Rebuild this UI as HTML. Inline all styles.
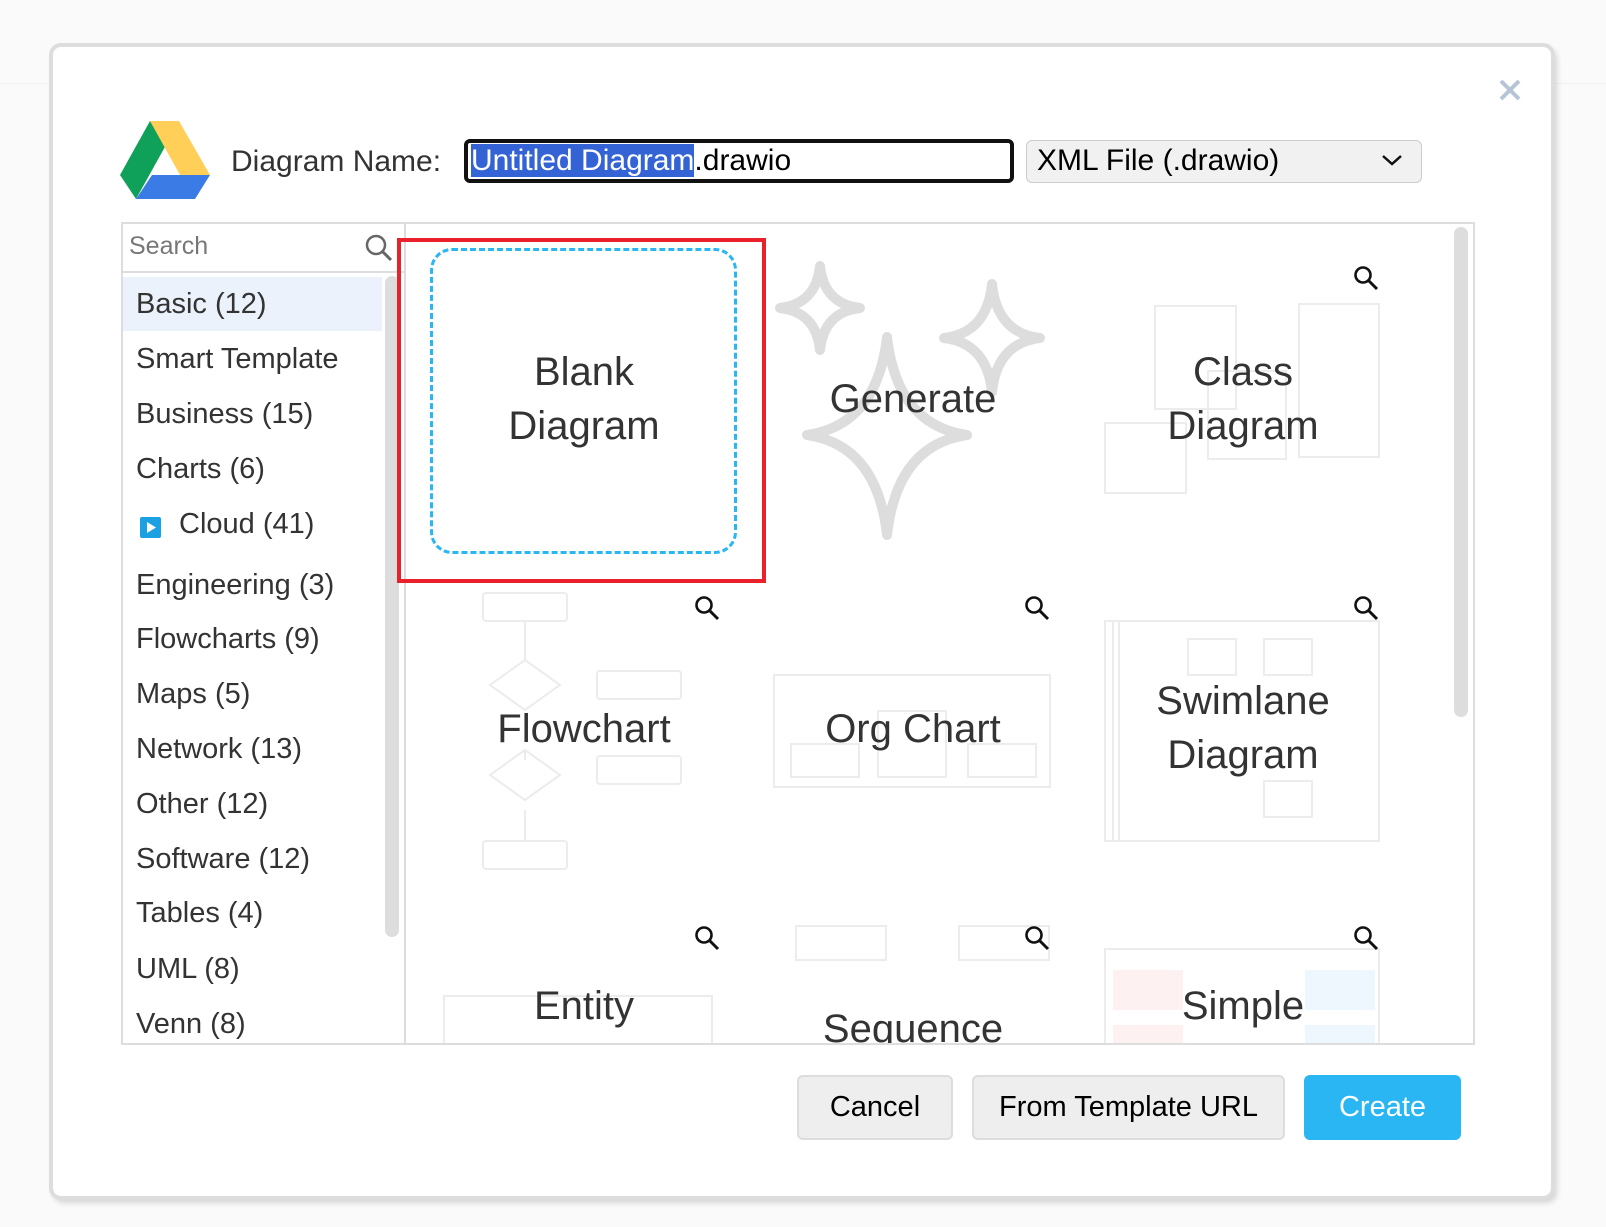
<!DOCTYPE html>
<html><head><meta charset="utf-8"><style>
*{margin:0;padding:0;box-sizing:border-box}
body{width:1606px;height:1227px;background:#fafafa;position:relative;overflow:hidden;font-family:"Liberation Sans","DejaVu Sans",sans-serif;color:#333}
.a{position:absolute}
.dlg{left:53px;top:47px;width:1498px;height:1149px;background:#fff;border-radius:8px;box-shadow:0 0 0 4px #ddd,3px 4px 6px 3px rgba(0,0,0,.15)}
.li{position:absolute;left:136px;font-size:29px;color:#333;line-height:40px;white-space:nowrap}
.t{position:absolute;font-size:40px;color:#333;text-align:center;line-height:54px;width:320px;white-space:nowrap}
.btn{position:absolute;top:1075px;height:65px;border-radius:6px;font-size:29px;display:flex;align-items:center;justify-content:center;color:#000}
.g{border:2px solid #ececec;position:absolute}
</style></head><body>
<div class="a" style="left:0;top:0;width:1606px;height:84px;border-bottom:1px solid #f0f0f0"></div>
<div class="a dlg"></div>
<svg class="a" style="left:1498px;top:78px" width="24" height="24"><path d="M3 3L21 21M21 3L3 21" stroke="#b5c5d5" stroke-width="4"/></svg>
<svg class="a" style="left:120px;top:121px" width="90" height="78" viewBox="0 0 90 78">
<polygon points="30,0 0,54 16,78 46,24" fill="#0fa15a"/>
<polygon points="30,0 59,0 90,54 60,54" fill="#ffcf57"/>
<polygon points="32,54 90,54 75,78 16,78" fill="#3b7be5"/>
</svg>
<div class="a" style="left:231px;top:145px;font-size:30px;color:#333">Diagram Name:</div>
<div class="a" style="left:464px;top:139px;width:550px;height:44px;border:4px solid #111;border-radius:6px;font-size:30px;line-height:36px;padding-left:3px;color:#000;white-space:nowrap"><span style="background:#3463d6;color:#fff">Untitled Diagram</span>.drawio</div>
<div class="a" style="left:1026px;top:140px;width:396px;height:43px;border:1px solid #ccc;border-radius:6px;background:#f1f1f1;font-size:30px;line-height:40px;padding-left:10px;color:#000">XML File (.drawio)
<svg class="a" style="right:18px;top:12px" width="22" height="14"><path d="M2 3L11 11L20 3" stroke="#111" stroke-width="2.5" fill="none"/></svg></div>
<div class="a" style="left:121px;top:222px;width:1354px;height:823px;border:2px solid #ddd"></div>
<div class="a" style="left:404px;top:222px;width:2px;height:823px;background:#ddd"></div>
<div class="a" style="left:121px;top:271px;width:283px;height:2px;background:#ddd"></div>
<div class="a" style="left:129px;top:232px;font-size:25px;color:#777">Search</div>
<svg class="a" style="left:364px;top:233px" width="30" height="30"><circle cx="12" cy="12" r="9" stroke="#666" stroke-width="2.5" fill="none"/><path d="M18 18L27 27" stroke="#666" stroke-width="3"/></svg>
<div class="a" style="left:123px;top:277px;width:259px;height:54px;background:#ebf2fb"></div>
<div class="a" style="left:385px;top:276px;width:14px;height:661px;background:#ddd;border-radius:7px"></div>
<div class="a" style="left:1454px;top:227px;width:14px;height:490px;background:#ddd;border-radius:7px"></div>
<div class="li" style="top:284px">Basic (12)</div>
<div class="li" style="top:339px">Smart Template</div>
<div class="li" style="top:394px">Business (15)</div>
<div class="li" style="top:449px">Charts (6)</div>
<div class="a" style="left:140px;top:517px;width:21px;height:21px;background:#1ba1e2;border-radius:2px"></div>
<svg class="a" style="left:140px;top:517px" width="21" height="21"><polygon points="7,5 16,10.5 7,16" fill="#fff"/></svg>
<div class="li" style="top:504px;left:179px">Cloud (41)</div>
<div class="li" style="top:565px">Engineering (3)</div>
<div class="li" style="top:619px">Flowcharts (9)</div>
<div class="li" style="top:674px">Maps (5)</div>
<div class="li" style="top:729px">Network (13)</div>
<div class="li" style="top:784px">Other (12)</div>
<div class="li" style="top:839px">Software (12)</div>
<div class="li" style="top:893px">Tables (4)</div>
<div class="li" style="top:949px">UML (8)</div>
<div class="li" style="top:1004px;height:38px;overflow:hidden">Venn (8)</div>
<div class="a" style="left:406px;top:224px;width:1046px;height:819px;overflow:hidden">
<div style="position:absolute;left:-406px;top:-224px;width:1606px;height:1227px">
<div class="a" style="left:430px;top:248px;width:307px;height:306px;border:3px dashed #29b6f2;border-radius:22px"></div>
<svg class="a" style="left:770px;top:255px" width="290" height="290">
<g fill="none" stroke="#ddd" stroke-width="10" stroke-linejoin="round">
<path d="M117 82Q127 170 197 180Q127 190 117 280Q107 190 37 180Q107 170 117 82Z"/>
<path d="M50 11Q54 49 90 53Q54 57 50 95Q46 57 10 53Q46 49 50 11Z"/>
<path d="M222 29Q227 78 270 83Q227 88 222 137Q217 88 174 83Q217 78 222 29Z"/>
</g></svg>
<div class="g" style="left:1154px;top:305px;width:83px;height:105px"></div>
<div class="g" style="left:1298px;top:303px;width:82px;height:155px"></div>
<div class="g" style="left:1104px;top:422px;width:83px;height:72px"></div>
<div class="g" style="left:1207px;top:370px;width:80px;height:90px"></div>
<div class="g" style="left:482px;top:592px;width:86px;height:30px;border-radius:4px"></div>
<div class="g" style="left:596px;top:670px;width:86px;height:30px;border-radius:4px"></div>
<div class="g" style="left:596px;top:755px;width:86px;height:30px;border-radius:4px"></div>
<div class="g" style="left:482px;top:840px;width:86px;height:30px;border-radius:4px"></div>
<svg class="a" style="left:480px;top:620px" width="120" height="230"><g fill="none" stroke="#ececec" stroke-width="2"><path d="M45 0V40M45 130V140M45 190V220"/><polygon points="45,40 80,65 45,90 10,65"/><polygon points="45,130 80,155 45,180 10,155"/></g></svg>
<div class="g" style="left:773px;top:674px;width:278px;height:114px"></div>
<div class="g" style="left:790px;top:743px;width:70px;height:35px"></div>
<div class="g" style="left:877px;top:710px;width:70px;height:68px"></div>
<div class="g" style="left:967px;top:743px;width:70px;height:35px"></div>
<div class="g" style="left:1104px;top:620px;width:276px;height:222px"></div>
<div class="g" style="left:1112px;top:620px;width:8px;height:222px"></div>
<div class="g" style="left:1187px;top:638px;width:50px;height:38px"></div>
<div class="g" style="left:1263px;top:638px;width:50px;height:38px"></div>
<div class="g" style="left:1263px;top:780px;width:50px;height:38px"></div>
<div class="g" style="left:443px;top:995px;width:270px;height:80px"></div>
<div class="g" style="left:795px;top:925px;width:92px;height:36px"></div>
<div class="g" style="left:958px;top:925px;width:92px;height:36px"></div>
<div class="g" style="left:1104px;top:948px;width:276px;height:120px"></div>
<div class="a" style="left:1113px;top:970px;width:70px;height:40px;background:#fdf1f1"></div>
<div class="a" style="left:1305px;top:970px;width:70px;height:40px;background:#eef7fd"></div>
<div class="a" style="left:1113px;top:1025px;width:70px;height:40px;background:#fdf1f1"></div>
<div class="a" style="left:1305px;top:1025px;width:70px;height:40px;background:#eef7fd"></div>
<div class="t" style="left:424px;top:345px">Blank<br>Diagram</div>
<div class="t" style="left:753px;top:372px">Generate</div>
<div class="t" style="left:1083px;top:345px">Class<br>Diagram</div>
<div class="t" style="left:424px;top:702px">Flowchart</div>
<div class="t" style="left:753px;top:702px">Org Chart</div>
<div class="t" style="left:1083px;top:674px">Swimlane<br>Diagram</div>
<div class="t" style="left:424px;top:979px">Entity</div>
<div class="t" style="left:753px;top:1002px">Sequence</div>
<div class="t" style="left:1083px;top:979px">Simple</div>
</div></div>
<div class="a" style="left:397px;top:238px;width:369px;height:345px;border:4px solid #e8212b"></div>
<svg width="0" height="0" style="position:absolute"><defs><g id="m"><circle cx="10" cy="10" r="7.5" stroke="#111" stroke-width="2.6" fill="none"/><path d="M15.5 15.5L24 24" stroke="#111" stroke-width="3"/></g></defs></svg>
<svg class="a" style="left:1353px;top:265px" width="28" height="28"><use href="#m"/></svg>
<svg class="a" style="left:694px;top:595px" width="28" height="28"><use href="#m"/></svg>
<svg class="a" style="left:1024px;top:595px" width="28" height="28"><use href="#m"/></svg>
<svg class="a" style="left:1353px;top:595px" width="28" height="28"><use href="#m"/></svg>
<svg class="a" style="left:694px;top:925px" width="28" height="28"><use href="#m"/></svg>
<svg class="a" style="left:1024px;top:925px" width="28" height="28"><use href="#m"/></svg>
<svg class="a" style="left:1353px;top:925px" width="28" height="28"><use href="#m"/></svg>
<div class="btn" style="left:797px;width:156px;background:#eee;border:2px solid #ddd">Cancel</div>
<div class="btn" style="left:972px;width:313px;background:#eee;border:2px solid #ddd">From Template URL</div>
<div class="btn" style="left:1304px;width:157px;background:#29b6f2;color:#fff">Create</div>
</body></html>
